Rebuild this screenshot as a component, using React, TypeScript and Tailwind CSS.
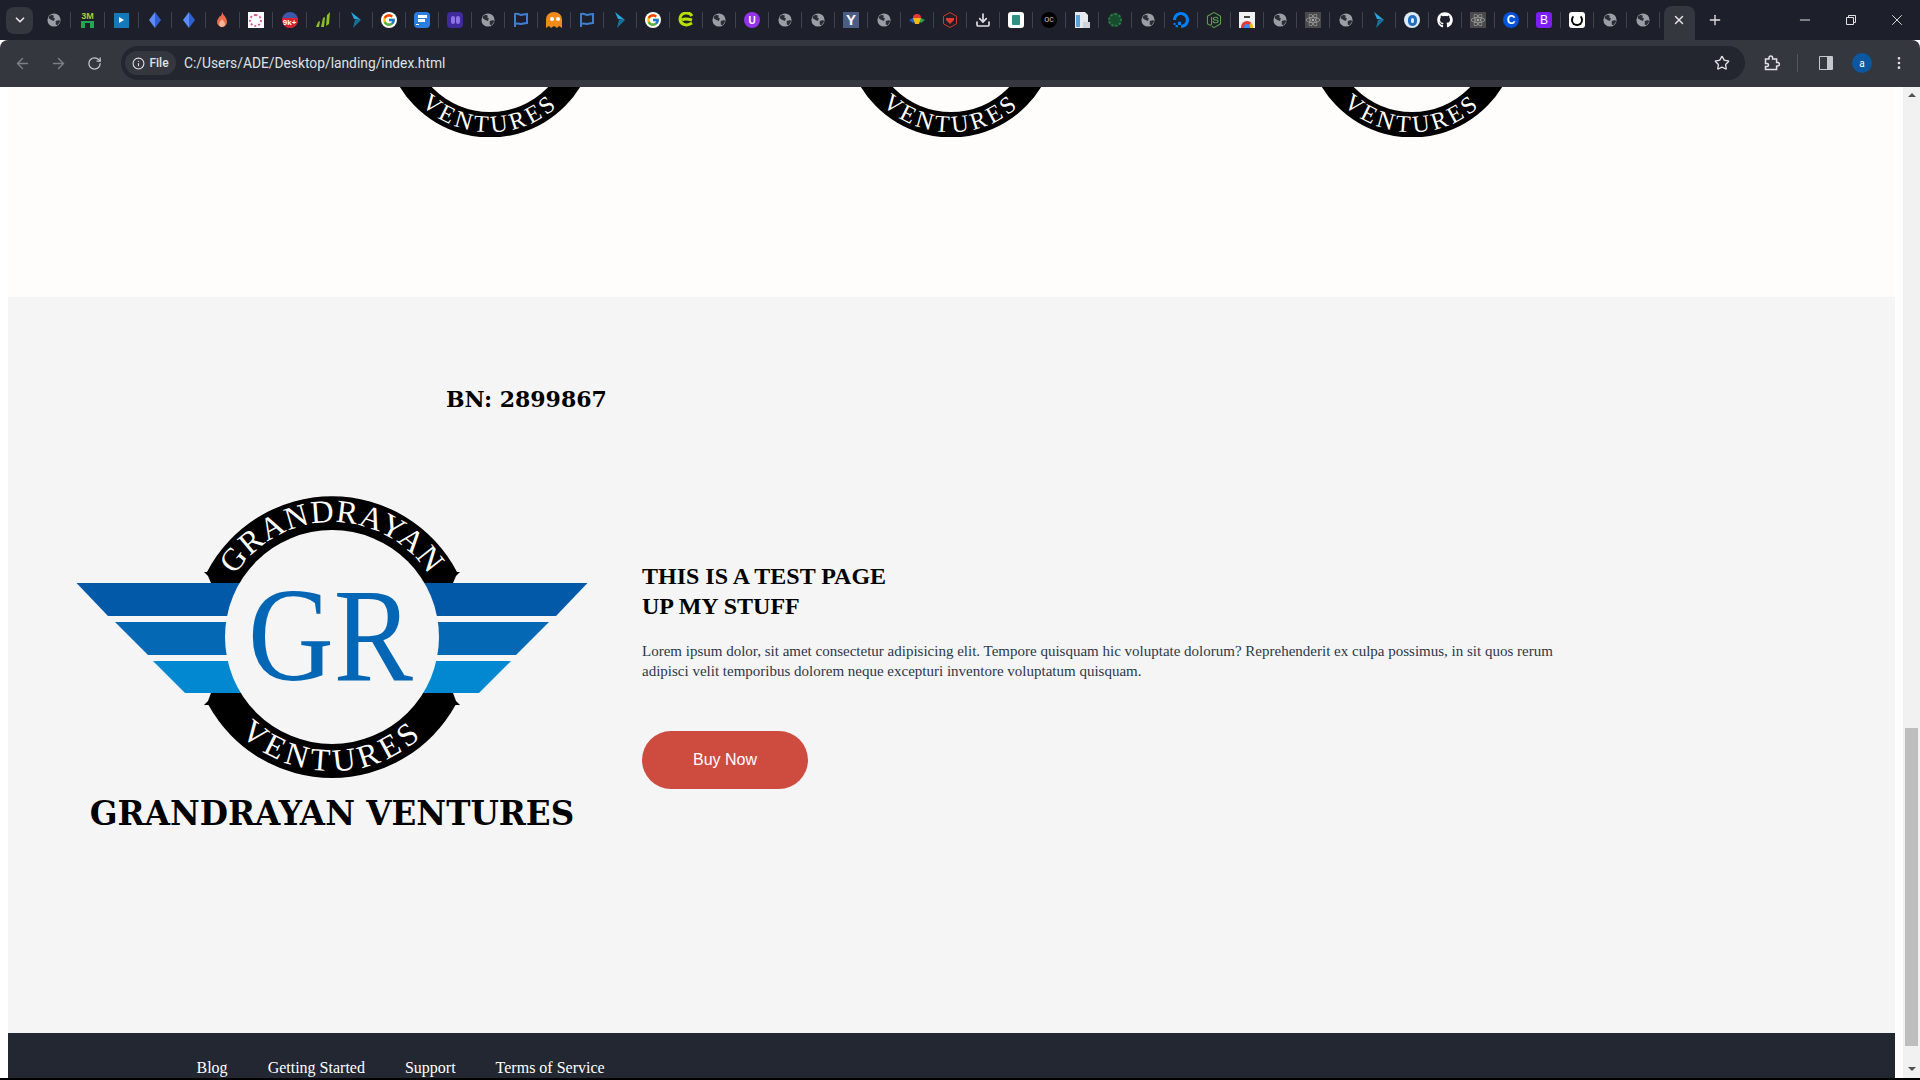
import { ArrowLeft, ArrowRight, ChevronDown, Download, EllipsisVertical, Info, Minus, Plus, RotateCw, Star, X } from "lucide-react";
import { FaGithub, FaReact } from "react-icons/fa";
import { FcGoogle } from "react-icons/fc";
import { SiDigitalocean, SiNodedotjs } from "react-icons/si";

const serif = "font-['Liberation_Serif','Times_New_Roman',serif]";
const slab = "font-['DejaVu_Serif',serif]";

const favicons = [
  "globe", "3m", "play", "gem", "gem", "flame", "wheel", "badge", "bars", "arrow", "google", "f", "purple", "globe", "flag", "ghost", "flag", "arrow",
  "google", "e", "globe", "u", "globe", "globe", "y", "globe", "colors", "hex", "download", "b", "oc", "doc", "seal", "globe", "ocean", "node", "store", "globe",
  "atom", "globe", "arrow", "swirl", "github", "atom", "c", "bootstrap", "knight", "globe", "globe",
];

function Favicon({ kind }: { kind: string }) {
  switch (kind) {
    case "globe":
      return (
        <svg viewBox="0 0 16 16" className="size-[14px]">
          <circle cx="8" cy="8" r="7.5" fill="#9b9ea5" />
          <path d="M2 4l3-2 3 1-1 2 2 1-1 3-3-1-3-2zM10 9l4-1 1 2-3 4-2-1z" fill="#2b2e36" />
        </svg>
      );
    case "3m":
      return (
        <div className="flex h-4 w-4 flex-col items-center font-['Liberation_Sans',sans-serif] text-[9px] leading-[9px] font-bold text-[#a6ce39]">
          3M
          <span className="h-[7px] w-[13px] border-t-2 border-x-4 border-[#1faa4d]" />
        </div>
      );
    case "play":
      return (
        <div className="flex size-[15px] items-center justify-center bg-[#1479b8]">
          <div className="h-0 w-0 border-y-[3px] border-l-[5px] border-y-transparent border-l-white" />
        </div>
      );
    case "gem":
      return (
        <svg viewBox="0 0 16 16" className="size-4">
          <path d="M8 0l6 8-6 8z" fill="#2f5fd0" />
          <path d="M8 0L2 8l6 8z" fill="#5d8cf5" />
        </svg>
      );
    case "flame":
      return (
        <svg viewBox="0 0 16 16" className="size-4">
          <path d="M8 0c1 3 5 5 5 10a5 5 0 0 1-10 0c0-3 2-4 3-6 1 1 2-2 2-4z" fill="#ea6a4a" />
          <path d="M8 7c1 2 3 3 3 5a3 3 0 0 1-6 0c0-2 2-3 3-5z" fill="#f7b39a" />
        </svg>
      );
    case "wheel":
      return (
        <div className="flex size-4 items-center justify-center bg-white">
          <div className="size-[13px] rounded-full border-2 border-dotted border-[#e0518f]" />
        </div>
      );
    case "badge":
      return (
        <div className="relative size-4 overflow-hidden rounded-full bg-[#3c5aa8]">
          <div className="absolute inset-x-0 bottom-0 h-[10px] bg-[#d8202f] text-center font-['Liberation_Sans',sans-serif] text-[8px] leading-[10px] font-bold text-white">9k+</div>
        </div>
      );
    case "bars":
      return (
        <svg viewBox="0 0 16 16" className="size-4">
          <path d="M1 15l2-5 2-1-1 6zM6 15l2-9 2-1-1 10zM11 14l1-11 3-3-1 12z" fill="#8fc31f" />
        </svg>
      );
    case "arrow":
      return (
        <svg viewBox="0 0 16 16" className="size-4">
          <path d="M3 0l10 8-7-1z" fill="#2aa7dc" />
          <path d="M13 8L5 16l2-8z" fill="#13729c" />
        </svg>
      );
    case "google":
      return (
        <div className="flex size-4 items-center justify-center rounded-full bg-white">
          <FcGoogle size={14} />
        </div>
      );
    case "f":
      return (
        <div className="relative size-4 rounded-sm bg-[#2a7de1]">
          <div className="absolute top-[3px] left-1 h-[3px] w-[9px] bg-white" />
          <div className="absolute top-[7px] left-1 h-[3px] w-[7px] bg-white" />
          <div className="absolute top-[12px] left-[2px] h-[1px] w-[3px] bg-white" />
        </div>
      );
    case "purple":
      return (
        <div className="flex size-4 items-center justify-center gap-[1px] rounded-sm bg-[#3f2a9c]">
          <div className="h-2 w-1 rounded-full bg-[#8d72e8]" />
          <div className="h-2 w-1 rounded-full bg-[#8d72e8]" />
        </div>
      );
    case "flag":
      return (
        <svg viewBox="0 0 16 16" className="size-4" fill="none" stroke="#3f7fd0" strokeWidth="2">
          <path d="M2 15V2c4-1 4 1 6 1s3-1 6-1v9c-3 0-4 1-6 1s-3-1-6 0" />
        </svg>
      );
    case "ghost":
      return (
        <svg viewBox="0 0 16 16" className="size-4">
          <path d="M0 16V7a8 7 0 0 1 16 0v9l-3-2-2 2-3-2-3 2-2-2z" fill="#f08a18" />
          <circle cx="6" cy="7" r="2" fill="#fff" />
          <circle cx="12" cy="7" r="2" fill="#fff" />
        </svg>
      );
    case "e":
      return (
        <svg viewBox="0 0 16 16" className="size-4" fill="none" stroke="#b6e000" strokeWidth="3">
          <path d="M14 4a6.500 6.500 0 0 0-12 3c0 5 6 8 12 4M4 8c3-2 6-1 10 0" />
        </svg>
      );
    case "u":
      return (
        <div className="flex size-4 items-center justify-center rounded-full bg-[#9333ea] font-['Liberation_Sans',sans-serif] text-[10px] font-bold text-white">U</div>
      );
    case "y":
      return (
        <div className="flex size-4 items-center justify-center bg-[#4a5d85] font-['Liberation_Sans',sans-serif] text-[15px] font-bold text-white">Y</div>
      );
    case "colors":
      return (
        <svg viewBox="0 0 16 16" className="size-4">
          <path d="M4 6a4 4 0 0 1 8 0z" fill="#e53935" />
          <path d="M0 8l4-2 2 3-2 2z" fill="#1e5fd8" />
          <path d="M16 8l-4-2-2 3 2 2z" fill="#2e9e4f" />
          <path d="M4 6h8l-2 6H6z" fill="#f2b90f" />
        </svg>
      );
    case "hex":
      return (
        <svg viewBox="0 0 16 16" className="size-4">
          <path d="M8 .5l6.500 3.700v7.600L8 15.500l-6.500-3.700V4.200z" fill="none" stroke="#d8352a" />
          <path d="M4 6h8v2l-4 4-4-4z" fill="#e53a2e" />
        </svg>
      );
    case "download":
      return <Download size={16} className="text-[#dfe1e5]" strokeWidth={2.5} />;
    case "b":
      return (
        <div className="flex size-4 items-center justify-center rounded-[3px] bg-white">
          <div className="h-[10px] w-2 rounded-[1px] bg-[#2f8f83]" />
        </div>
      );
    case "oc":
      return (
        <div className="flex size-4 items-center justify-center rounded-full bg-black font-['Liberation_Sans',sans-serif] text-[9px] text-[#bbbbbb]">oc</div>
      );
    case "doc":
      return (
        <svg viewBox="0 0 16 16" className="size-4">
          <path d="M1 0h10l3 3v13H1z" fill="#e6e9ee" />
          <path d="M2 3h4v12H2z" fill="#5aa2d8" />
          <path d="M9 10h7v6H9z" fill="#cfd4da" />
        </svg>
      );
    case "seal":
      return (
        <div className="size-[14px] rounded-full border-2 border-dotted border-[#2f7a4c] bg-[#174d2c]" />
      );
    case "ocean":
      return <SiDigitalocean size={16} className="text-[#0080ff]" />;
    case "node":
      return <SiNodedotjs size={16} className="text-[#5fa04e]" />;
    case "store":
      return (
        <div className="relative size-4 overflow-hidden bg-[#f1f1f1]">
          <div className="absolute top-1 left-[5px] h-[2px] w-[6px] bg-[#444444]" />
          <div className="absolute top-[9px] left-[2px] size-3 rounded-full border-[3px] border-t-[#e53935] border-r-[#f2b90f] border-b-[#2e9e4f] border-l-[#e53935] bg-[#4285f4]" />
        </div>
      );
    case "atom":
      return (
        <div className="flex size-4 items-center justify-center bg-[#4a4a4a]">
          <FaReact size={14} className="text-[#a8a8a8]" />
        </div>
      );
    case "swirl":
      return (
        <div className="flex size-4 items-center justify-center rounded-full bg-[#dfeaf7]">
          <div className="h-[11px] w-[9px] rounded-full border-[3px] border-[#1f6fc4]" />
        </div>
      );
    case "github":
      return <FaGithub size={16} className="text-white" />;
    case "c":
      return (
        <div className="flex size-4 items-center justify-center rounded-full bg-[#0052d9] font-['Liberation_Sans',sans-serif] text-[12px] font-bold text-white">C</div>
      );
    case "bootstrap":
      return (
        <div className="flex size-4 items-center justify-center rounded-[3px] bg-[#7b1ff2] font-['Liberation_Sans',sans-serif] text-[12px] text-white">B</div>
      );
    case "knight":
      return (
        <div className="flex size-4 items-center justify-center rounded-[3px] bg-white">
          <div className="size-3 rounded-full border-2 border-black border-t-transparent" />
        </div>
      );
    default:
      return null;
  }
}

function Logo({ hole, className }: { hole: string; className: string }) {
  return (
    <svg viewBox="0 0 512 282" className={className}>
      <g transform="translate(256 141)">
        <path d="M-128-65H-125A141 141 0 0 1 125-65H128L124-61L121-54H-121L-124-61Z" fill="#000" />
        <path d="M-121 56L-124 64L-128 68H-123.500A141 141 0 0 0 123.500 68H128L124 64L121 56Z" fill="#000" />
        <path d="M-255.500-54H255.500L224-21H-224Z" fill="#0259a8" />
        <path d="M-217-15H217L184 18H-184Z" fill="#0468b4" />
        <path d="M-179 24H179L147 56H-147Z" fill="#0288d1" />
        <circle r="107" fill={hole} />
        <path id="logo-top" d="M-115 0A115 115 0 0 1 115 0" fill="none" />
        <path id="logo-bottom" d="M-134 0A134 134 0 0 0 134 0" fill="none" />
        <text className={serif} fontSize="32" fill="#fff">
          <textPath href="#logo-top" startOffset="50%" textAnchor="middle" letterSpacing="1">GRANDRAYAN</textPath>
        </text>
        <text className={serif} fontSize="32" fill="#fff">
          <textPath href="#logo-bottom" startOffset="50%" textAnchor="middle" letterSpacing="4.5">VENTURES</textPath>
        </text>
        <text x="-84" y="43" className={serif} fontSize="133" fill="#0467b6" textLength="165" lengthAdjust="spacingAndGlyphs">GR</text>
      </g>
    </svg>
  );
}

function BrowserChrome() {
  return (
    <>
      <div className="relative flex h-10 items-center bg-[#1d202a] pl-[6px] text-[#dfe1e5]">
        <div className="flex h-[27px] w-[27px] items-center justify-center rounded-lg bg-[#35373f]">
          <ChevronDown size={14} strokeWidth={3} />
        </div>
        <div className="ml-[4.500px] flex">
          {favicons.map((kind, i) => (
            <div key={i} className={`flex h-4 items-center justify-center border-r border-[#3f424b] ${i < 8 ? "w-[33.700px]" : "w-[33px]"}`}>
              <Favicon kind={kind} />
            </div>
          ))}
        </div>
        <div className="relative ml-[3.500px] flex h-[34px] w-[31px] items-center justify-center self-end rounded-t-lg bg-[#35373f] pb-[6px]">
          <X size={14} strokeWidth={2.500} />
        </div>
        <Plus size={16} className="ml-[12px]" />
        <Minus size={16} strokeWidth={1.500} className="ml-[74px]" />
        <svg viewBox="0 0 12 12" className="ml-[32px] size-3" fill="none" stroke="#dfe1e5">
          <path d="M1.500 3.500h7v7h-7zM3.500 3.500v-2h7v7h-2" />
        </svg>
        <X size={18} strokeWidth={1.250} className="ml-[31px]" />
      </div>
      <div className="flex h-[47px] items-center rounded-t-lg bg-[#35373f] pb-px text-[#dfe1e5]">
        <ArrowLeft size={17} className="ml-[14px] text-[#7d7f86]" />
        <ArrowRight size={17} className="ml-[19px] text-[#7d7f86]" />
        <RotateCw size={15} className="ml-[20px] text-[#c4c7cc]" />
        <div className="ml-[19px] flex h-[34px] w-[1624px] items-center rounded-full bg-[#23262e] pl-[4px] font-['Roboto',sans-serif]">
          <div className="flex h-6 w-[51px] items-center justify-center gap-1 rounded-full bg-[#35373f] text-[12px] font-medium">
            <Info size={13} />
            File
          </div>
          <span className="ml-[8px] text-[13.800px]">C:/Users/ADE/Desktop/landing/index.html</span>
          <Star size={16} className="mr-[15px] ml-auto" />
        </div>
        <svg viewBox="0 0 16 16" className="ml-[19px] size-4" fill="none" stroke="#dfe1e5" strokeWidth="1.500">
          <path d="M1.500 4h3.500V2.800a1.800 1.800 0 0 1 3.600 0V4h4v3.500h1a1.800 1.800 0 0 1 0 3.600h-1v3.400H1.500v-3h1.500a1.500 1.500 0 0 0 0-3H1.500z" />
        </svg>
        <div className="ml-[17px] h-[18px] w-px bg-[#55575e]" />
        <svg viewBox="0 0 14 14" className="ml-[21px] size-[14px]">
          <path d="M.5.500h13v13H.500z" fill="none" stroke="#c4c7cc" />
          <path d="M8 1h5v12H8z" fill="#c4c7cc" />
        </svg>
        <div className="ml-[19px] flex size-5 items-center justify-center rounded-full bg-[#0b57a0] font-['Roboto',sans-serif] text-[10px] text-white">a</div>
        <EllipsisVertical size={16} className="ml-[19px]" />
      </div>
    </>
  );
}

export default function App() {
  return (
    <div className={`flex h-screen w-[1920px] flex-col overflow-hidden bg-white ${serif}`}>
      <BrowserChrome />

      <div className="flex min-h-0 flex-1">
        <main className="flex w-[1903px] flex-col pl-2 pr-2">
          <section className="h-[210px] overflow-hidden bg-[#fffdfb]">
            <div className="mt-[-161.500px] flex gap-[77px] pl-[290px]">
              <Logo hole="#fffdfb" className="w-[384px] shrink-0" />
              <Logo hole="#fffdfb" className="w-[384px] shrink-0" />
              <Logo hole="#fffdfb" className="w-[384px] shrink-0" />
            </div>
          </section>

          <section className="flex-1 bg-[#f5f5f5]">
            <h2 className={`pt-[87px] pl-[438px] text-[22px] leading-[30px] font-bold text-black ${slab}`}>BN: 2899867</h2>

            <div className="mt-[82px] flex pl-[68px]">
              <div className="w-[512px] shrink-0">
                <Logo hole="#f5f5f5" className="w-[512px]" />
                <p className={`mt-[16px] text-center text-[32.600px] leading-10 font-bold whitespace-nowrap text-black ${slab}`}>GRANDRAYAN VENTURES</p>
              </div>

              <div className="ml-[54px] w-[930px] pt-[65px]">
                <h1 className="text-[24px] leading-[30px] font-bold text-black">
                  THIS IS A TEST PAGE
                  <br />
                  UP MY STUFF
                </h1>
                <p className="mt-[20px] text-[15px] leading-[20px] text-[#2d3748]">
                  Lorem ipsum dolor, sit amet consectetur adipisicing elit. Tempore quisquam hic voluptate dolorum? Reprehenderit ex culpa possimus, in sit quos rerum adipisci velit temporibus dolorem neque excepturi inventore voluptatum quisquam.
                </p>
                <button className="mt-[50px] h-[58px] w-[166px] rounded-[29px] bg-[#cd4c3f] font-['Liberation_Sans',sans-serif] text-[16px] text-white">Buy Now</button>
              </div>
            </div>
          </section>

          <footer className="flex h-[45px] shrink-0 items-end gap-10 bg-[#222732] pl-[188.500px] text-[16px] leading-5 text-white">
            <a>Blog</a>
            <a>Getting Started</a>
            <a>Support</a>
            <a>Terms of Service</a>
          </footer>
        </main>

        <div className="flex w-[17px] flex-col items-center bg-[#f1f1f1]">
          <div className="mt-[6px] h-0 w-0 border-x-[4px] border-b-[4px] border-x-transparent border-b-[#505050]" />
          <div className="mt-[631px] h-[318px] w-[13px] bg-[#bebebe]" />
          <div className="mt-[21px] h-0 w-0 border-x-[4px] border-t-[4px] border-x-transparent border-t-[#505050]" />
        </div>
      </div>
      <div className="h-[2px] shrink-0 bg-black" />
    </div>
  );
}
